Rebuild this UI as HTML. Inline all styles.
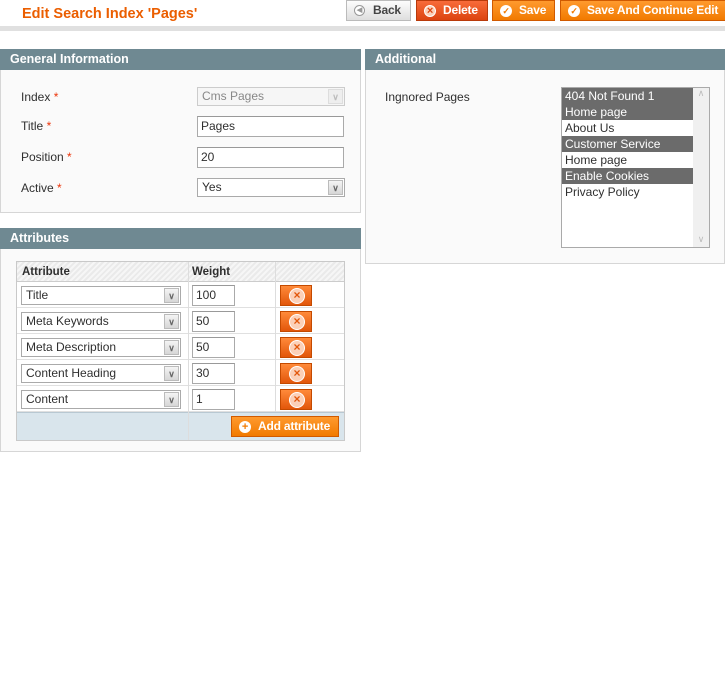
<!DOCTYPE html>
<html><head><meta charset="utf-8"><style>
*{box-sizing:border-box;margin:0;padding:0}
body{width:725px;height:680px;background:#fff;font-family:"Liberation Sans",Arial,sans-serif;font-size:12px;color:#2f2f2f;position:relative;overflow:hidden}
.a{position:absolute}
.title{left:22px;top:5px;color:#eb5e00;font-weight:bold;font-size:14.5px;line-height:18px}
.btn{position:absolute;top:0;height:21px;border:1px solid #d05a00;background:linear-gradient(#ff9a2e,#f17a00);color:#fff;font-weight:bold;font-size:12px;line-height:19px;padding-left:26px;white-space:nowrap;letter-spacing:-0.2px}
.btn i{position:absolute;left:7px;top:4px;width:12px;height:12px;border-radius:50%;background:#fff;color:#f17a00;font-style:normal;font-size:9px;line-height:12px;text-align:center;font-weight:bold}
.hdr{position:absolute;height:21px;background:#6f8992;color:#fff;font-weight:bold;font-size:12.5px;line-height:21px;padding-left:10px}
.box{position:absolute;background:#fafafa;border:1px solid #d6d6d6;border-top:none}
.lbl{position:absolute;left:21px;font-size:12px}
.lbl b{color:#eb340a;font-weight:normal}
.inp{position:absolute;background:#fff;border:1px solid #aaa;font-size:12px;padding-left:3px;line-height:18px;border-top-color:#999}
.sel{position:absolute;background:#fff;border:1px solid #aaa;font-size:12px;padding-left:4px;line-height:16px}
.sel .ar{position:absolute;right:1px;top:1px;bottom:1px;width:15px;background:linear-gradient(#f4f4f4,#d6d6d6);border:1px solid #bbb;color:#666;font-size:9px;text-align:center;line-height:14px;font-weight:bold}
.opt{height:16px;line-height:16px;padding-left:3px;font-size:12px}
.on{background:#6b6b6b;color:#fff}
.del{position:absolute;left:280px;width:32px;height:21px;border:1px solid #c44a00;background:linear-gradient(#ff8a3a,#e2560a)}
.del:after{content:"\00d7";position:absolute;left:8px;top:2px;width:14px;height:14px;border-radius:50%;background:#fbd0b8;border:1px solid #fff;color:#e2560a;font-size:12px;line-height:12px;text-align:center;font-weight:bold}
.row{position:absolute;left:17px;width:327px;height:26px;background:#fff;border-bottom:1px solid #e0e0e0}
</style></head><body>
<div class="a title">Edit Search Index 'Pages'</div>
<div class="btn" style="left:346px;width:65px;background:linear-gradient(#fdfdfd,#dedede);border-color:#bbb;color:#444;">
<i style="background:#fff;border:1px solid #999;width:11px;height:11px;top:4px;color:#999;font-size:7px;line-height:9px">&#9664;</i>Back</div>
<div class="btn" style="left:416px;width:72px;background:linear-gradient(#f86b3a,#dc4410);border-color:#b83a0b">
<i style="background:#fbd0b8;border:1px solid #fff;color:#dc4410;font-size:11px;line-height:10px">&#215;</i>Delete</div>
<div class="btn" style="left:492px;width:63px"><i>&#10003;</i>Save</div>
<div class="btn" style="left:560px;width:166px"><i>&#10003;</i>Save And Continue Edit</div>
<div class="a" style="left:0;top:26px;width:725px;height:5px;background:#e0e0e0"></div>

<div class="hdr" style="left:0;top:49px;width:361px">General Information</div>
<div class="box" style="left:0;top:70px;width:361px;height:143px"></div>
<div class="lbl" style="top:90px">Index <b>*</b></div>
<div class="lbl" style="top:119px">Title <b>*</b></div>
<div class="lbl" style="top:150px">Position <b>*</b></div>
<div class="lbl" style="top:181px">Active <b>*</b></div>
<div class="sel" style="left:197px;top:87px;width:148px;height:19px;color:#888;border-color:#ccc;background:#f6f6f6">Cms Pages<span class="ar" style="background:#eee;color:#bbb;border-color:#ddd">&#8744;</span></div>
<div class="inp" style="left:197px;top:116px;width:147px;height:21px">Pages</div>
<div class="inp" style="left:197px;top:147px;width:147px;height:21px">20</div>
<div class="sel" style="left:197px;top:178px;width:148px;height:19px">Yes<span class="ar">&#8744;</span></div>

<div class="hdr" style="left:365px;top:49px;width:360px">Additional</div>
<div class="box" style="left:365px;top:70px;width:360px;height:194px"></div>
<div class="a" style="left:385px;top:90px">Ingnored Pages</div>
<div class="a" style="left:561px;top:87px;width:149px;height:161px;background:#fff;border:1px solid #aaa;padding-top:0">
<div style="width:131px">
<div class="opt on">404 Not Found 1</div>
<div class="opt on">Home page</div>
<div class="opt">About Us</div>
<div class="opt on">Customer Service</div>
<div class="opt">Home page</div>
<div class="opt on">Enable Cookies</div>
<div class="opt">Privacy Policy</div></div>
<div class="a" style="right:0;top:0;width:16px;height:159px;background:#f0f0f0;color:#bbb;font-size:9px;text-align:center">&#8743;<div style="position:absolute;bottom:2px;width:16px">&#8744;</div></div>
</div>

<div class="hdr" style="left:0;top:228px;width:361px">Attributes</div>
<div class="box" style="left:0;top:249px;width:361px;height:203px"></div>
<div class="a" style="left:16px;top:261px;width:329px;height:180px;border:1px solid #c9c9c9;background:#fff"></div>
<div class="a" style="left:17px;top:262px;width:327px;height:20px;background:repeating-linear-gradient(135deg,#eaeaea 0 2px,#f6f6f6 2px 4px);border-bottom:1px solid #ccc;font-weight:bold;font-size:11.5px;line-height:20px">
<span class="a" style="left:5px">Attribute</span><span class="a" style="left:175px">Weight</span></div>
<div class="row" style="top:282px"></div>
<div class="row" style="top:308px"></div>
<div class="row" style="top:334px"></div>
<div class="row" style="top:360px"></div>
<div class="row" style="top:386px"></div>
<div class="a" style="left:17px;top:412px;width:327px;height:28px;background:#d9e5ec;border-top:1px solid #b8c8d2"></div>
<div class="a" style="left:188px;top:262px;width:1px;height:178px;background:#ddd"></div>
<div class="a" style="left:275px;top:262px;width:1px;height:150px;background:#ddd"></div>

<div class="sel" style="left:21px;top:286px;width:160px;height:19px">Title<span class="ar">&#8744;</span></div>
<div class="sel" style="left:21px;top:312px;width:160px;height:19px">Meta Keywords<span class="ar">&#8744;</span></div>
<div class="sel" style="left:21px;top:338px;width:160px;height:19px">Meta Description<span class="ar">&#8744;</span></div>
<div class="sel" style="left:21px;top:364px;width:160px;height:19px">Content Heading<span class="ar">&#8744;</span></div>
<div class="sel" style="left:21px;top:390px;width:160px;height:19px">Content<span class="ar">&#8744;</span></div>
<div class="inp" style="left:192px;top:285px;width:43px;height:21px">100</div>
<div class="inp" style="left:192px;top:311px;width:43px;height:21px">50</div>
<div class="inp" style="left:192px;top:337px;width:43px;height:21px">50</div>
<div class="inp" style="left:192px;top:363px;width:43px;height:21px">30</div>
<div class="inp" style="left:192px;top:389px;width:43px;height:21px">1</div>
<div class="del" style="top:285px"></div>
<div class="del" style="top:311px"></div>
<div class="del" style="top:337px"></div>
<div class="del" style="top:363px"></div>
<div class="del" style="top:389px"></div>
<div class="btn" style="left:231px;top:416px;width:108px;height:21px;padding-left:26px"><i style="font-size:11px">+</i>Add attribute</div>
</body></html>
